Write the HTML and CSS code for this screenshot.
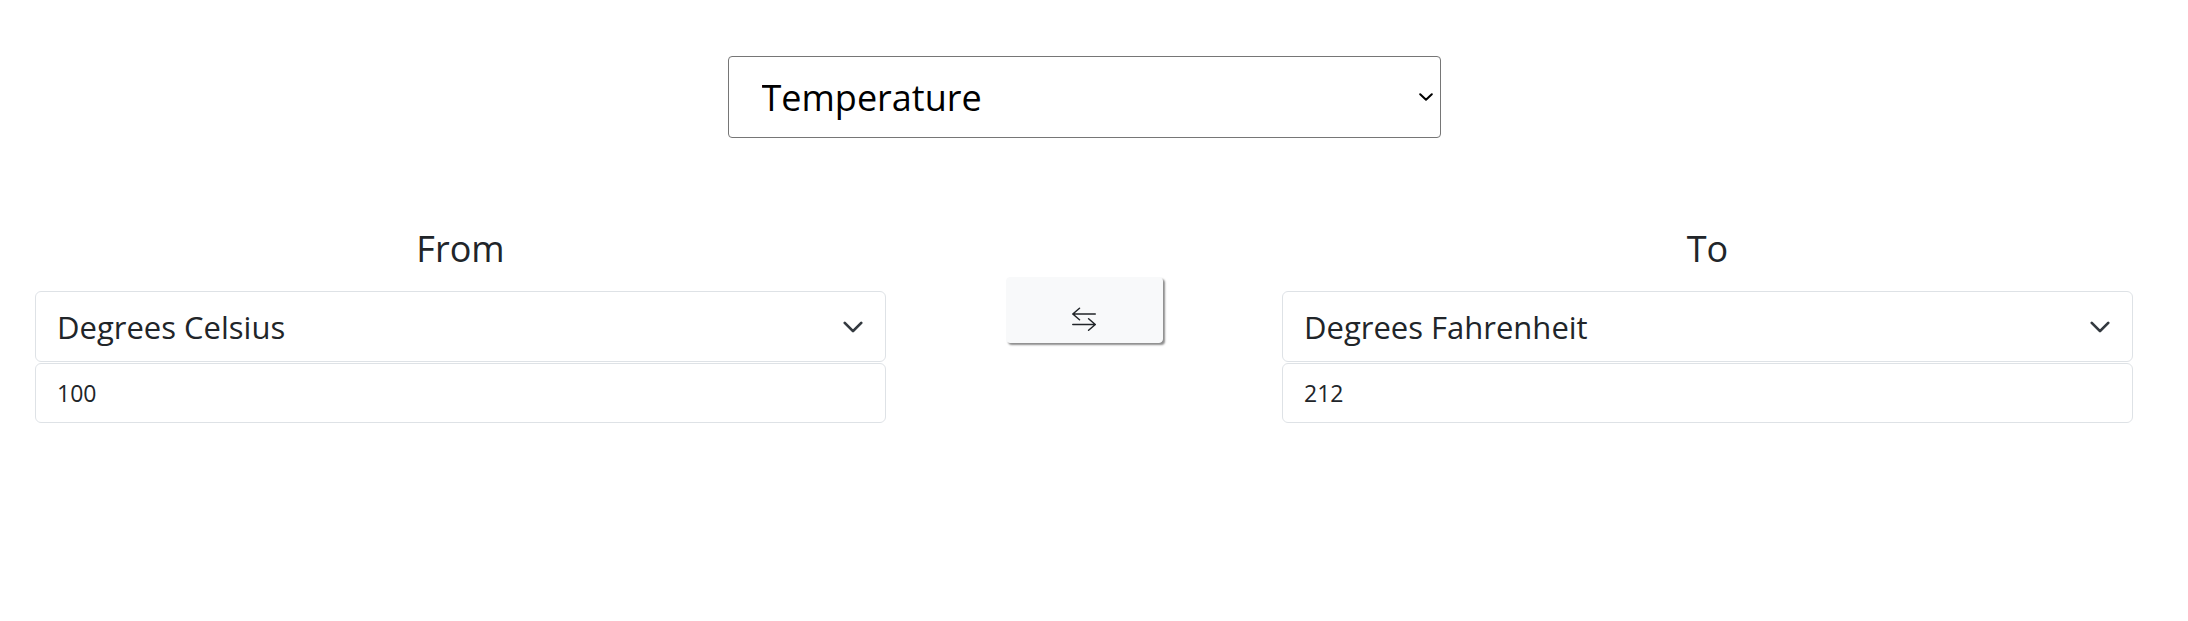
FILE: index.html
```html
<!DOCTYPE html>
<html lang="en">
<head>
<meta charset="utf-8">
<title>Unit Converter</title>
<link rel="stylesheet" href="styles.css">
</head>
<body>
<main class="page">
  <div class="top">
    <select class="category">
      <option selected>Temperature</option>
      <option>Length</option>
      <option>Mass</option>
    </select>
  </div>
  <div class="converter">
    <div class="side">
      <h2 class="label">From</h2>
      <select class="unit">
        <option selected>Degrees Celsius</option>
        <option>Degrees Fahrenheit</option>
        <option>Kelvin</option>
      </select>
      <input class="value" type="text" value="100">
    </div>
    <div class="middle">
      <button class="swap" type="button" aria-label="Swap units">
        <svg class="swap-icon" width="24" height="24" viewBox="0 0 24 24" fill="none" stroke="#212529" stroke-width="1.5" stroke-linecap="round" stroke-linejoin="round">
          <path d="M23.3 7H0.8M0.8 7L7.5 1.2M0.8 7L7.5 12.8"/>
          <path d="M0.8 17.5H23.3M23.3 17.5L16.6 11.7M23.3 17.5L16.6 23.3"/>
        </svg>
      </button>
    </div>
    <div class="side">
      <h2 class="label">To</h2>
      <select class="unit">
        <option selected>Degrees Fahrenheit</option>
        <option>Degrees Celsius</option>
        <option>Kelvin</option>
      </select>
      <input class="value" type="text" value="212">
    </div>
  </div>
</main>
</body>
</html>
```
FILE: styles.css
```css
* { box-sizing: border-box; }

body {
  margin: 0;
  background: #fff;
  font-family: "Open Sans", "Noto Sans", sans-serif;
  color: #212529;
}

.top {
  display: flex;
  justify-content: center;
  padding: 56px 55px 0 35px;
}

.category {
  display: block;
  width: 713px;
  height: 82px;
  padding: 0 30px 0 33px;
  font-family: "Open Sans", "Noto Sans", sans-serif;
  font-size: 36px;
  color: #000;
  background-color: #fff;
  border: 1px solid #767676;
  border-radius: 4px;
  appearance: none;
  -webkit-appearance: none;
  background-image: url("data:image/svg+xml,%3csvg xmlns='http://www.w3.org/2000/svg' viewBox='0 0 14 8'%3e%3cpath fill='none' stroke='%23000' stroke-width='2' stroke-linecap='round' stroke-linejoin='round' d='M1.2 1.2l5.8 5.6 5.8-5.6'/%3e%3c/svg%3e");
  background-repeat: no-repeat;
  background-size: 14px 8px;
  background-position: right 7px center;
}

.converter {
  display: grid;
  grid-template-columns: 1fr 396px 1fr;
  padding: 91px 55px 0 35px;
}

.side {
  display: flex;
  flex-direction: column;
}

.label {
  margin: 0;
  font-size: 36px;
  line-height: 40px;
  font-weight: 400;
  text-align: center;
  color: #212529;
}

.unit {
  display: block;
  width: 100%;
  height: 71px;
  margin-top: 22px;
  padding: 0 60px 0 21px;
  font-family: "Open Sans", "Noto Sans", sans-serif;
  font-size: 31px;
  color: #212529;
  background-color: #fff;
  border: 1px solid #dee2e6;
  border-radius: 6px;
  appearance: none;
  -webkit-appearance: none;
  background-image: url("data:image/svg+xml,%3csvg xmlns='http://www.w3.org/2000/svg' viewBox='0 0 16 16'%3e%3cpath fill='none' stroke='%23343a40' stroke-linecap='round' stroke-linejoin='round' stroke-width='2' d='m2 5 6 6 6-6'/%3e%3c/svg%3e");
  background-repeat: no-repeat;
  background-size: 22px 22px;
  background-position: right 21px center;
}

.value {
  display: block;
  width: 100%;
  height: 60px;
  margin-top: 1px;
  padding: 0 21px;
  font-family: "Open Sans", "Noto Sans", sans-serif;
  font-size: 23px;
  color: #212529;
  background: #fff;
  border: 1px solid #dee2e6;
  border-radius: 6px;
  outline: none;
}

.middle {
  display: flex;
  justify-content: center;
  align-items: flex-start;
  padding-top: 48px;
}

.swap {
  display: flex;
  justify-content: center;
  align-items: center;
  width: 157px;
  height: 66px;
  padding: 18px 0 0 0;
  background: #f8f9fa;
  border: 1px solid #f8f9fa;
  border-radius: 4px;
  box-shadow: 2px 2px 2px rgba(0, 0, 0, 0.45);
  cursor: pointer;
}

.swap-icon {
  display: block;
}
```
